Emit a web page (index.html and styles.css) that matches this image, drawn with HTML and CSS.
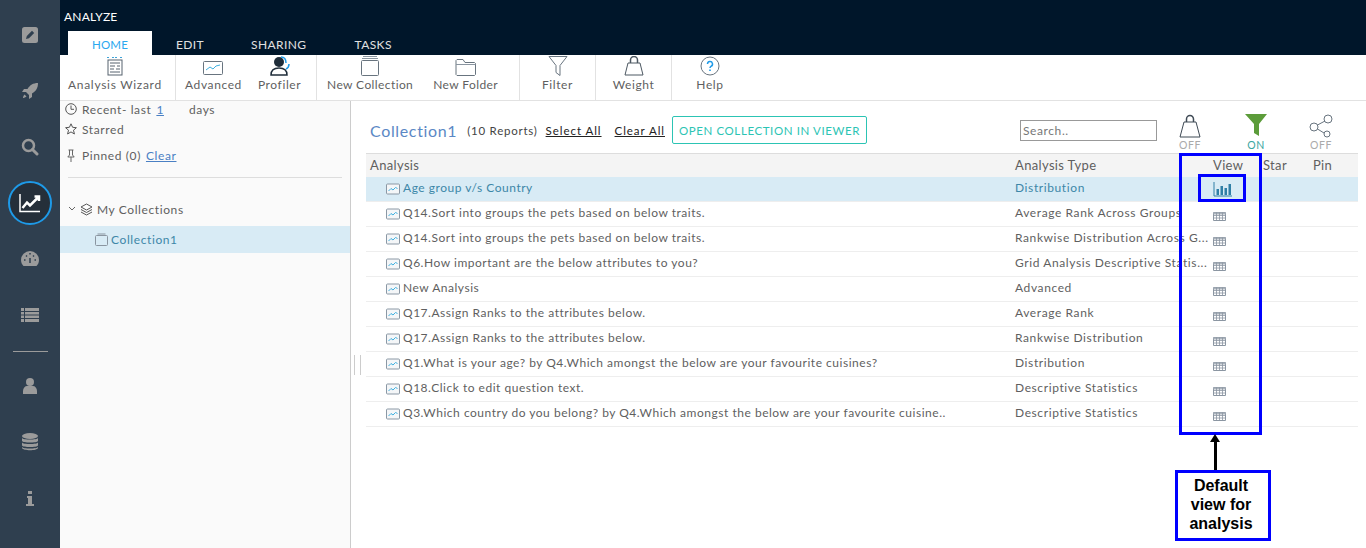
FILE: index.html
```html
<!DOCTYPE html>
<html lang="en">
<head>
    <meta charset="UTF-8">
    <title>Analyze</title>
    <link rel="stylesheet" href="styles.css">
</head>
<body>
    <svg class="defs" width="0" height="0">
        <symbol id="i-line" viewBox="0 0 14 12">
            <rect x="0.5" y="1" width="13" height="10" rx="1" fill="#f4f6f8" stroke="#8b98a5"/>
            <path d="M2.5 8 L5 5.5 L7 7 L9.5 4.5 L11.5 5.5" fill="none" stroke="#3fb0e0" stroke-width="1"/>
        </symbol>
        <symbol id="i-grid" viewBox="0 0 13 9">
            <path d="M0.5 0.5H12.5V8.5H0.5Z" fill="#fff" stroke="#8b96a2"/>
            <path d="M0.5 1.5H12.5" stroke="#aab3bc" stroke-width="2"/>
            <path d="M0.5 3.5H12.5M0.5 6H12.5M3.5 0.5V8.5M6.5 0.5V8.5M9.5 0.5V8.5" stroke="#8b96a2" stroke-width="0.8"/>
        </symbol>
    </svg>

    <nav class="rail">
        <a class="rail-item"><svg width="18" height="18" viewBox="0 0 18 18"><rect width="16" height="16" x="1" y="1" rx="2.5" fill="#9b9b9b"/><path d="M5 13l.8-3 5.2-5.2 2.2 2.2L8 12.2z" fill="#2f3f4f"/></svg></a>
        <a class="rail-item"><svg width="18" height="18" viewBox="0 0 18 18"><path d="M17 1c-5 0-8 2-10.5 6H3L1 10h4l3 3v4l3-2v-3.5C15 9 17 6 17 1zM3.5 12.5C2 14 2 16 2 16s2 0 3.5-1.5z" fill="#9b9b9b"/></svg></a>
        <a class="rail-item"><svg width="18" height="18" viewBox="0 0 18 18"><circle cx="7.5" cy="7.5" r="5.5" fill="none" stroke="#9b9b9b" stroke-width="2.5"/><path d="M11.5 11.5L16 16" stroke="#9b9b9b" stroke-width="3" stroke-linecap="round"/></svg></a>
        <a class="rail-item rail-active"><svg width="22" height="20" viewBox="0 0 22 20"><path d="M1 1V18.5H21" fill="none" stroke="#fff" stroke-width="1.5"/><path d="M3.5 15L8 9.5l3 3L19.5 4M15.5 3.5H20V8" fill="none" stroke="#fff" stroke-width="2.5"/></svg></a>
        <a class="rail-item"><svg width="20" height="18" viewBox="0 0 20 18"><path d="M10 1a9 9 0 0 0-9 9c0 2.5 1 4.5 2.5 6h13c1.5-1.5 2.5-3.5 2.5-6a9 9 0 0 0-9-9z" fill="#9b9b9b"/><path d="M10 13V8M4 10h1.5M14.5 10H16M6 5.5l1 1M14 5.5l-1 1M10 3v1.5" stroke="#2f3f4f" stroke-width="1.5"/></svg></a>
        <a class="rail-item"><svg width="18" height="14" viewBox="0 0 18 14"><path d="M0 0h3v3H0zM4 0h14v3H4zM0 4h3v2.5H0zM4 4h14v2.5H4zM0 7.5h3V10H0zM4 7.5h14V10H4zM0 11h3v3H0zM4 11h14v3H4z" fill="#9b9b9b"/></svg></a>
        <div class="rail-line"></div>
        <a class="rail-item"><svg width="14" height="16" viewBox="0 0 14 16"><circle cx="7" cy="4" r="4" fill="#9b9b9b"/><path d="M0 16v-3c0-3 2-5 4-5h6c2 0 4 2 4 5v3z" fill="#9b9b9b"/></svg></a>
        <a class="rail-item"><svg width="16" height="18" viewBox="0 0 16 18"><ellipse cx="8" cy="3" rx="8" ry="3" fill="#9b9b9b"/><path d="M0 5c1 2 15 2 16 0v3c-1 2-15 2-16 0zM0 9.5c1 2 15 2 16 0v3c-1 2-15 2-16 0zM0 14c1 2 15 2 16 0v1c-1 3-15 3-16 0z" fill="#9b9b9b"/></svg></a>
        <a class="rail-item"><svg width="8" height="15" viewBox="0 0 8 15"><path d="M2 0h4v3H2zM1 5h5v8h2v2H0v-2h2V7H1z" fill="#9b9b9b"/></svg></a>
    </nav>

    <div class="main">
        <header class="topbar">
            <div class="app-title">ANALYZE</div>
            <div class="tabs">
                <span class="tab tab-on">HOME</span>
                <span class="tab tab-edit">EDIT</span>
                <span class="tab tab-sharing">SHARING</span>
                <span class="tab">TASKS</span>
            </div>
        </header>

        <div class="toolbar">
            <div class="tool-group group-wizard">
                <div class="tool">
                    <svg width="18" height="20" viewBox="0 0 18 20"><path d="M1 1.5h3M14 1.5h3M6 1.5h6" stroke="#3fa3d8" stroke-dasharray="2 1"/><rect x="2" y="4" width="14" height="15" fill="#fff" stroke="#56626e"/><path d="M4 7h10M4 10h5M11 10h3M4 13h4M10 13h4M4 16h10" stroke="#56626e"/></svg>
                    <span>Analysis Wizard</span>
                </div>
            </div>
            <div class="tool-group group-adv">
                <div class="tool">
                    <svg width="20" height="15" viewBox="0 0 20 15"><rect x="0.5" y="0.5" width="19" height="13" rx="1" fill="#fff" stroke="#68747f"/><path d="M3 9l4-3 3 2 3-3 4-1" fill="none" stroke="#3fb0e0"/></svg>
                    <span>Advanced</span>
                </div>
                <div class="tool">
                    <svg width="20" height="20" viewBox="0 0 20 20"><circle cx="9" cy="6" r="5" fill="#1f2d3a"/><path d="M1 19c0-5 3-7 8-7s8 2 8 7z" fill="#fff" stroke="#1f2d3a" stroke-width="1.5"/><path d="M11 1c3 0 5 2 5 6M16 13c2-1 3-3 3-5" fill="none" stroke="#1e9ae8" stroke-width="1.5"/></svg>
                    <span>Profiler</span>
                </div>
            </div>
            <div class="tool-group group-new">
                <div class="tool">
                    <svg width="20" height="20" viewBox="0 0 20 20"><path d="M3 .5h14M2 2.500h16" stroke="#8a95a0"/><rect x="1.5" y="4.5" width="17" height="15" rx="1" fill="#fff" stroke="#68747f"/></svg>
                    <span>New Collection</span>
                </div>
                <div class="tool">
                    <svg width="21" height="18" viewBox="0 0 21 18"><path d="M1 16.5V2.5l1-1h6l2 3h9.500l1 1v11l-1 1H2z" fill="#fff" stroke="#68747f"/><path d="M1 6.5h19.5" stroke="#8a95a0"/></svg>
                    <span>New Folder</span>
                </div>
            </div>
            <div class="tool-group group-filter">
                <div class="tool">
                    <svg width="20" height="20" viewBox="0 0 20 20"><path d="M1 .5h18l-7 9v10l-4-3v-7z" fill="#fff" stroke="#68747f"/></svg>
                    <span>Filter</span>
                </div>
            </div>
            <div class="tool-group group-weight">
                <div class="tool">
                    <svg width="20" height="20" viewBox="0 0 20 20"><path d="M4 7h12l3 12H1z" fill="#fff" stroke="#4d5862"/><path d="M6.5 7V4a3.500 3.500 0 0 1 7 0v3" fill="none" stroke="#4d5862" stroke-width="1.5"/></svg>
                    <span>Weight</span>
                </div>
            </div>
            <div class="tool-group group-help">
                <div class="tool">
                    <svg width="20" height="20" viewBox="0 0 20 20"><circle cx="10" cy="10" r="9" fill="#fff" stroke="#68747f"/><path d="M7.5 8a2.500 2.500 0 1 1 3.500 2.300c-.8.400-1 .8-1 1.700" fill="none" stroke="#1e9ae8" stroke-width="1.5"/><path d="M9.200 13.500h1.600v1.600H9.200z" fill="#1e9ae8"/></svg>
                    <span>Help</span>
                </div>
            </div>
        </div>

        <div class="content">
            <aside class="sidebar">
                <div class="side-row row-recent">
                    <svg class="side-icon" width="12" height="12" viewBox="0 0 12 12"><circle cx="6" cy="6" r="5.300" fill="none" stroke="#555"/><path d="M6 2.500V6.300H9" fill="none" stroke="#555"/></svg>
                    <span>Recent- last</span><a class="side-link link-days">1</a><span>days</span>
                </div>
                <div class="side-row row-starred">
                    <svg class="side-icon" width="12" height="12" viewBox="0 0 12 12"><path d="M6 .8l1.600 3.500 3.800.4-2.900 2.500.9 3.800L6 8.900 2.600 11l.9-3.800L.6 4.700l3.800-.4z" fill="none" stroke="#555"/></svg>
                    <span>Starred</span>
                </div>
                <div class="side-row row-pinned">
                    <svg class="side-icon" width="12" height="13" viewBox="0 0 12 13"><path d="M3.500 1h5M4.500 1v5L2.800 8h6.400L7.500 6V1M6 8v5" fill="none" stroke="#666"/></svg>
                    <span>Pinned (0)</span><a class="side-link">Clear</a>
                </div>
                <div class="side-sep"></div>
                <div class="side-row row-root">
                    <svg width="8" height="6" viewBox="0 0 8 6"><path d="M1 1l3 3 3-3" fill="none" stroke="#666"/></svg>
                    <svg width="13" height="13" viewBox="0 0 13 13"><path d="M6.500 1L12 4 6.500 7 1 4z" fill="#fff" stroke="#555"/><path d="M1 6.500l5.500 3 5.500-3M1 9l5.500 3L12 9" fill="none" stroke="#555"/></svg>
                    <span>My Collections</span>
                </div>
                <div class="side-row row-coll">
                    <svg width="13" height="13" viewBox="0 0 13 13"><path d="M2.500 1h8" stroke="#8a95a0"/><rect x="0.5" y="2.5" width="12" height="10" rx="1" fill="none" stroke="#8a95a0"/></svg>
                    <span>Collection1</span>
                </div>
            </aside>

            <section class="panel">
                <div class="splitter"></div>
                <div class="panel-head">
                    <h2 class="coll-name">Collection1</h2>
                    <span class="coll-count">(10 Reports)</span>
                    <a class="head-link link-select">Select All</a>
                    <a class="head-link link-clear">Clear All</a>
                    <button class="open-btn">OPEN COLLECTION IN VIEWER</button>
                    <input class="search" placeholder="Search..">
                    <div class="toggle toggle-weight">
                        <svg width="22" height="24" viewBox="0 0 22 24"><path d="M5 8h12l4 15H1z" fill="#fff" stroke="#3f4a55"/><path d="M7.5 8V5a3.500 3.500 0 0 1 7 0v3" fill="none" stroke="#3f4a55" stroke-width="1.5"/></svg>
                        <span>OFF</span>
                    </div>
                    <div class="toggle toggle-filter">
                        <svg width="22" height="22" viewBox="0 0 22 22"><path d="M0 0h22l-8 10v12l-5-3v-9z" fill="#5c9c3a"/></svg>
                        <span class="on">ON</span>
                    </div>
                    <div class="toggle toggle-share">
                        <svg width="24" height="24" viewBox="0 0 24 24"><circle cx="19" cy="5" r="4" fill="#fff" stroke="#68747f"/><circle cx="5" cy="13" r="4" fill="#fff" stroke="#68747f"/><circle cx="18" cy="20" r="3" fill="#fff" stroke="#68747f"/><path d="M8.500 11L16 7M8.500 15l6.500 4" stroke="#68747f"/></svg>
                        <span>OFF</span>
                    </div>
                </div>

                <div class="grid">
                    <div class="grid-row grid-head">
                        <span class="cell-name">Analysis</span><span>Analysis Type</span><span>View</span><span>Star</span><span>Pin</span>
                    </div>
                    <div class="grid-row row-sel">
                        <span class="cell-name"><svg class="line-ic"><use href="#i-line"/></svg>Age group v/s Country</span>
                        <span class="cell-type">Distribution</span>
                        <span><svg class="bar-ic" width="19" height="15" viewBox="0 0 19 15"><path d="M1 0V14H19" fill="none" stroke="#2f7fa6"/><path d="M3.5 7h2.5v6H3.5zM7.5 4H10v9H7.5zM11.5 6H14v7h-2.5zM15.5 2H18v11h-2.5z" fill="#2f7fa6"/></svg></span>
                        <span></span><span></span>
                    </div>
                    <div class="grid-row"><span class="cell-name"><svg class="line-ic"><use href="#i-line"/></svg>Q14.Sort into groups the pets based on below traits.</span><span class="cell-type">Average Rank Across Groups</span><span><svg class="grid-ic"><use href="#i-grid"/></svg></span><span></span><span></span></div>
                    <div class="grid-row"><span class="cell-name"><svg class="line-ic"><use href="#i-line"/></svg>Q14.Sort into groups the pets based on below traits.</span><span class="cell-type">Rankwise Distribution Across G...</span><span><svg class="grid-ic"><use href="#i-grid"/></svg></span><span></span><span></span></div>
                    <div class="grid-row"><span class="cell-name"><svg class="line-ic"><use href="#i-line"/></svg>Q6.How important are the below attributes to you?</span><span class="cell-type">Grid Analysis Descriptive Statis...</span><span><svg class="grid-ic"><use href="#i-grid"/></svg></span><span></span><span></span></div>
                    <div class="grid-row"><span class="cell-name"><svg class="line-ic"><use href="#i-line"/></svg>New Analysis</span><span class="cell-type">Advanced</span><span><svg class="grid-ic"><use href="#i-grid"/></svg></span><span></span><span></span></div>
                    <div class="grid-row"><span class="cell-name"><svg class="line-ic"><use href="#i-line"/></svg>Q17.Assign Ranks to the attributes below.</span><span class="cell-type">Average Rank</span><span><svg class="grid-ic"><use href="#i-grid"/></svg></span><span></span><span></span></div>
                    <div class="grid-row"><span class="cell-name"><svg class="line-ic"><use href="#i-line"/></svg>Q17.Assign Ranks to the attributes below.</span><span class="cell-type">Rankwise Distribution</span><span><svg class="grid-ic"><use href="#i-grid"/></svg></span><span></span><span></span></div>
                    <div class="grid-row"><span class="cell-name"><svg class="line-ic"><use href="#i-line"/></svg>Q1.What is your age? by Q4.Which amongst the below are your favourite cuisines?</span><span class="cell-type">Distribution</span><span><svg class="grid-ic"><use href="#i-grid"/></svg></span><span></span><span></span></div>
                    <div class="grid-row"><span class="cell-name"><svg class="line-ic"><use href="#i-line"/></svg>Q18.Click to edit question text.</span><span class="cell-type">Descriptive Statistics</span><span><svg class="grid-ic"><use href="#i-grid"/></svg></span><span></span><span></span></div>
                    <div class="grid-row"><span class="cell-name"><svg class="line-ic"><use href="#i-line"/></svg>Q3.Which country do you belong? by Q4.Which amongst the below are your favourite cuisine..</span><span class="cell-type">Descriptive Statistics</span><span><svg class="grid-ic"><use href="#i-grid"/></svg></span><span></span><span></span></div>
                </div>
            </section>
        </div>
    </div>

    <!-- annotation drawn over the screenshot -->
    <div class="note-box note-col"></div>
    <div class="note-box note-cell"></div>
    <div class="note-arrow"></div>
    <div class="note-box note-text">Default view for analysis</div>
</body>
</html>
```

FILE: styles.css
```css
* {
    box-sizing: border-box;
}

html, body {
    height: 100%;
}

body {
    margin: 0;
    display: flex;
    overflow: hidden;
    background-color: #fff;
    color: #5f5f5f;
    font-family: Lato, "Open Sans", sans-serif;
    font-size: 12px;
    letter-spacing: 0.6px;
}

.defs {
    position: absolute;
}

/* left rail */
.rail {
    width: 60px;
    flex-shrink: 0;
    display: flex;
    flex-direction: column;
    align-items: center;
    padding-top: 13px;
    background-color: #2f3f4f;
}

.rail-item {
    width: 44px;
    height: 44px;
    flex-shrink: 0;
    margin-bottom: 12px;
    display: flex;
    align-items: center;
    justify-content: center;
    border-radius: 50%;
}

.rail-active {
    background-color: #252f3a;
    border: 2px solid #1e9ae8;
}

.rail-line {
    width: 35px;
    height: 1px;
    flex-shrink: 0;
    margin: 2px 0 12px;
    background-color: #9b9b9b;
}

.main {
    flex: 1;
    min-width: 0;
    display: flex;
    flex-direction: column;
}

/* top bar */
.topbar {
    height: 55px;
    display: flex;
    flex-direction: column;
    justify-content: space-between;
    padding-left: 4px;
    background-color: #00162a;
}

.app-title {
    padding-top: 9px;
    color: #fff;
    font-size: 12px;
    letter-spacing: 0.2px;
}

.tabs {
    display: flex;
    padding-left: 4px;
}

.tab {
    height: 24px;
    line-height: 28px;
    color: #e0e0e0;
    font-size: 12px;
    letter-spacing: 0.4px;
}

.tab-on {
    width: 84px;
    text-align: center;
    color: #2aa8ef;
    background-color: #fff;
    font-size: 11.5px;
    letter-spacing: 0.2px;
}

.tab-edit {
    margin: 0 47px 0 24px;
}

.tab-sharing {
    margin-right: 48px;
}

/* toolbar */
.toolbar {
    height: 46px;
    display: flex;
    flex-shrink: 0;
    border-bottom: 1px solid #e2e2e2;
    background-color: #fff;
}

.tool-group {
    display: flex;
    border-right: 1px solid #e2e2e2;
}

.group-wizard { width: 116px; padding-left: 8px; letter-spacing: 0.7px; }
.group-adv { width: 141px; padding-left: 9px; gap: 16px; }
.group-new { width: 203px; padding-left: 10px; gap: 20px; letter-spacing: 0.4px; }
.group-filter { width: 76px; justify-content: center; }
.group-weight { width: 76px; justify-content: center; }
.group-help { width: 76px; justify-content: center; border-right: 0; }

.tool {
    display: flex;
    flex-direction: column;
    align-items: center;
    justify-content: flex-end;
    padding-bottom: 8px;
    font-size: 12px;
    white-space: nowrap;
}

.tool svg {
    margin-bottom: 1px;
}

/* sidebar */
.content {
    flex: 1;
    display: flex;
    min-height: 0;
}

.sidebar {
    width: 291px;
    flex-shrink: 0;
    display: flex;
    flex-direction: column;
    border-right: 1px solid #ccc;
    background-color: #fafafa;
}

.side-row {
    display: flex;
    align-items: center;
    padding-left: 5px;
    flex-shrink: 0;
}

.side-icon {
    margin-right: 5px;
}

.row-recent {
    height: 18px;
    padding-bottom: 2px;
}

.link-days {
    margin: 0 25px 0 8px;
}

.row-starred {
    height: 20px;
}

.row-pinned {
    height: 20px;
    margin-top: 6px;
}

.side-link {
    color: #4a80c4;
    margin-left: 5px;
    text-decoration: underline;
}

.side-sep {
    height: 1px;
    margin: 12px 8px 0 8px;
    background-color: #ddd;
}

.row-root {
    height: 20px;
    gap: 4px;
    margin-top: 21px;
    padding-left: 8px;
}

.row-coll {
    height: 27px;
    gap: 3px;
    margin-top: 7px;
    padding-left: 35px;
    color: #3d87a8;
    background-color: #d8ebf5;
}

/* collection panel */
.panel {
    flex: 1;
    min-width: 0;
    position: relative;
    padding: 0 8px 0 15px;
}

.splitter {
    position: absolute;
    left: 3px;
    top: 254px;
    width: 7px;
    height: 20px;
    border-left: 1px solid #ccc;
    border-right: 1px solid #ccc;
}

.panel-head {
    height: 52px;
    display: flex;
    align-items: center;
    padding: 6px 0 0 4px;
}

.coll-name {
    margin: 0;
    color: #5b88c5;
    font-size: 16px;
    font-weight: 400;
    letter-spacing: 0.65px;
}

.coll-count {
    margin-left: 10px;
    font-size: 11.5px;
    letter-spacing: 0.75px;
    color: #444;
}

.head-link {
    color: #222;
    font-size: 11.5px;
    letter-spacing: 0.95px;
    text-decoration: underline;
}

.link-select { margin-left: 8px; }
.link-clear { margin-left: 13px; }

.open-btn {
    width: 195px;
    height: 28px;
    margin-left: 7px;
    padding: 0 6px;
    border: 1px solid #2cc4b4;
    border-radius: 2px;
    background-color: #fff;
    color: #2cc4b4;
    font-family: inherit;
    font-size: 11.5px;
    letter-spacing: 0.6px;
    white-space: nowrap;
}

.search {
    width: 137px;
    height: 21px;
    margin-left: 153px;
    padding: 0 2px;
    border: 1px solid #999;
    font-family: inherit;
    font-size: 12px;
    letter-spacing: 0.6px;
}

.search::placeholder {
    color: #777;
}

.toggle {
    width: 30px;
    display: flex;
    flex-direction: column;
    align-items: center;
    margin-top: 4px;
    color: #aaa;
    font-size: 10.5px;
    line-height: 12px;
}

.toggle svg {
    margin-bottom: 1px;
}

.toggle-filter svg {
    margin-bottom: 3px;
}

.toggle .on {
    color: #3aa6a0;
}

.toggle-weight { margin-left: 18px; }
.toggle-filter { margin-left: 36px; }
.toggle-share { margin-left: 35px; }

/* grid */
.grid-row {
    height: 25px;
    display: grid;
    grid-template-columns: 649px 198px 50px 50px 45px;
    align-items: center;
    border-bottom: 1px solid #eee;
}

.grid-head {
    height: 24px;
    padding-bottom: 2px;
    border-top: 1px solid #ddd;
    border-bottom: 0;
    background-color: #f4f4f4;
    font-size: 13px;
    letter-spacing: 0.35px;
}

.grid-head .cell-name {
    padding: 0 0 0 4px;
    letter-spacing: 0.35px;
}

.row-sel {
    color: #3d87a8;
    background-color: #d8ebf5;
}

.cell-name {
    display: flex;
    align-items: center;
    padding-left: 20px;
    padding-bottom: 3px;
    letter-spacing: 0.52px;
    white-space: nowrap;
}

.cell-type {
    padding-bottom: 3px;
    white-space: nowrap;
}

.line-ic {
    width: 14px;
    height: 12px;
    margin: 2px 3px 0 0;
    flex-shrink: 0;
}

.grid-ic {
    display: block;
    width: 13px;
    height: 9px;
    margin-top: 4px;
}

.bar-ic {
    display: block;
}

/* annotation */
.note-box {
    position: absolute;
    border: 3px solid #0000ff;
}

.note-col {
    left: 1179px;
    top: 153px;
    width: 83px;
    height: 282px;
}

.note-cell {
    left: 1198px;
    top: 174px;
    width: 48px;
    height: 28px;
}

.note-arrow {
    position: absolute;
    left: 1214px;
    top: 441px;
    width: 3px;
    height: 29px;
    background-color: #000;
}

.note-arrow::before {
    content: "";
    position: absolute;
    left: -4px;
    top: -7px;
    border-left: 5.5px solid transparent;
    border-right: 5.5px solid transparent;
    border-bottom: 8px solid #000;
}

.note-text {
    left: 1175px;
    top: 470px;
    width: 96px;
    height: 71px;
    padding: 3px 4px 0 0;
    background-color: #fff;
    color: #000;
    font-family: "Liberation Sans", Arial, sans-serif;
    font-size: 16px;
    font-weight: 700;
    line-height: 19px;
    letter-spacing: 0;
    text-align: center;
}
```
